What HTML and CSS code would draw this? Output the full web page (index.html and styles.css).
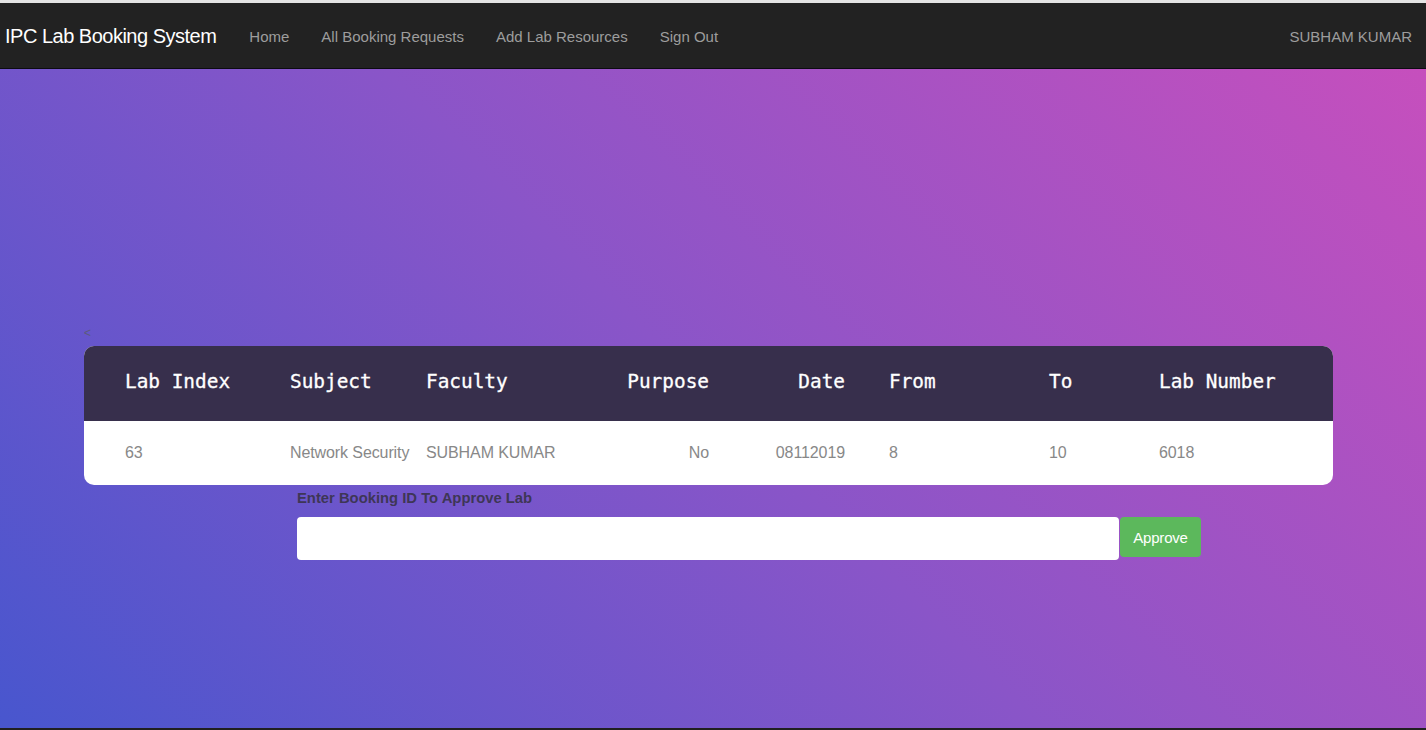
FILE: index.html
```html
<!DOCTYPE html>
<html lang="en">
<head>
<meta charset="utf-8">
<title>IPC Lab Booking System</title>
<link rel="stylesheet" href="styles.css">
</head>
<body>
<div class="page">
  <nav class="navbar">
    <a class="brand" href="#">IPC Lab Booking System</a>
    <ul class="nav-links">
      <li><a href="#">Home</a></li>
      <li><a href="#">All Booking Requests</a></li>
      <li><a href="#">Add Lab Resources</a></li>
      <li><a href="#">Sign Out</a></li>
    </ul>
    <div class="user">SUBHAM KUMAR</div>
  </nav>
  <main class="main">
    <div class="container">
      <div class="back">&lt;</div>
      <table class="bookings">
        <colgroup>
          <col class="c-index"><col class="c-subject"><col class="c-faculty"><col class="c-purpose">
          <col class="c-date"><col class="c-from"><col class="c-to"><col class="c-lab">
        </colgroup>
        <thead>
          <tr>
            <th class="first">Lab Index</th>
            <th>Subject</th>
            <th>Faculty</th>
            <th class="right">Purpose</th>
            <th class="right">Date</th>
            <th class="from">From</th>
            <th>To</th>
            <th>Lab Number</th>
          </tr>
        </thead>
        <tbody>
          <tr>
            <td class="first">63</td>
            <td>Network Security</td>
            <td>SUBHAM KUMAR</td>
            <td class="right">No</td>
            <td class="right">08112019</td>
            <td class="from">8</td>
            <td>10</td>
            <td>6018</td>
          </tr>
        </tbody>
      </table>
      <form class="approve">
        <label class="approve-label" for="bid">Enter Booking ID To Approve Lab</label>
        <div class="approve-row">
          <input id="bid" class="approve-input" type="text">
          <button class="approve-btn" type="button">Approve</button>
        </div>
      </form>
    </div>
  </main>
</div>
</body>
</html>
```

FILE: styles.css
```css
* { box-sizing: border-box; }
html, body { margin: 0; padding: 0; }
body {
  font-family: "Liberation Sans", Arial, sans-serif;
  background: #222;
}
.page {
  width: 1426px;
  height: 730px;
  display: flex;
  flex-direction: column;
  border-top: 3px solid #e4e4e4;
  border-bottom: 2px solid #202020;
  overflow: hidden;
}
.navbar {
  height: 66px;
  flex: 0 0 66px;
  background: #222;
  border-bottom: 1px solid #0c0c12;
  display: flex;
  align-items: center;
  padding: 2px 14px 0 5px;
}
.brand {
  color: #fff;
  font-size: 20px;
  letter-spacing: -0.5px;
  text-decoration: none;
  margin-right: 17px;
}
.nav-links {
  list-style: none;
  margin: 0;
  padding: 0;
  display: flex;
}
.nav-links a {
  display: block;
  padding: 0 16px;
  color: #9d9d9d;
  font-size: 15px;
  letter-spacing: 0;
  text-decoration: none;
}
.user {
  margin-left: auto;
  color: #9d9d9d;
  font-size: 15px;
  letter-spacing: 0;
}
.main {
  flex: 1;
  background: linear-gradient(45deg, #4856ce 0%, #8a55c8 50%, #c64fbd 100%);
}
.container {
  margin-left: 84px;
  width: 1249px;
  padding-top: 255px;
}
.back {
  height: 22px;
  line-height: 18px;
  font-size: 12px;
  color: #5b5b7a;
}
.bookings {
  width: 1249px;
  table-layout: fixed;
  border-collapse: separate;
  border-spacing: 0;
  border-radius: 10px;
  overflow: hidden;
  background: #fff;
}
.c-index { width: 206px; }
.c-subject { width: 136px; }
.c-faculty { width: 174px; }
.c-purpose { width: 109px; }
.c-date { width: 136px; }
.c-from { width: 204px; }
.c-to { width: 110px; }
.c-lab { width: 174px; }
.bookings th {
  background: #372f4c;
  color: #fff;
  font-family: "DejaVu Sans Mono", monospace;
  font-weight: normal;
  font-size: 19.4px;
  text-align: left;
  height: 75px;
  padding: 0 0 4px 0;
  white-space: nowrap;
  -webkit-text-stroke: 0.3px #fff;
}
.bookings td {
  height: 64px;
  padding: 0;
  color: #888;
  font-size: 16px;
  letter-spacing: -0.1px;
  white-space: nowrap;
}
.bookings .first { padding-left: 41px; }
.bookings .right { text-align: right; }
.bookings .from { padding-left: 44px; }
.approve {
  margin: 3px 0 0 213px;
}
.approve-label {
  display: block;
  height: 20px;
  line-height: 20px;
  font-size: 14.8px;
  font-weight: bold;
  color: #3e3656;
  margin-bottom: 9px;
}
.approve-row {
  display: flex;
  align-items: flex-start;
  gap: 1px;
}
.approve-input {
  width: 822px;
  height: 43px;
  border: none;
  border-radius: 4px;
  background: #fff;
  padding: 6px 12px;
  font-size: 14px;
}
.approve-btn {
  width: 81px;
  height: 40px;
  border: none;
  border-radius: 4px;
  background: #5cb85c;
  color: #fff;
  font-family: "Liberation Sans", Arial, sans-serif;
  font-size: 15px;
  letter-spacing: -0.2px;
  padding: 0;
}
```
